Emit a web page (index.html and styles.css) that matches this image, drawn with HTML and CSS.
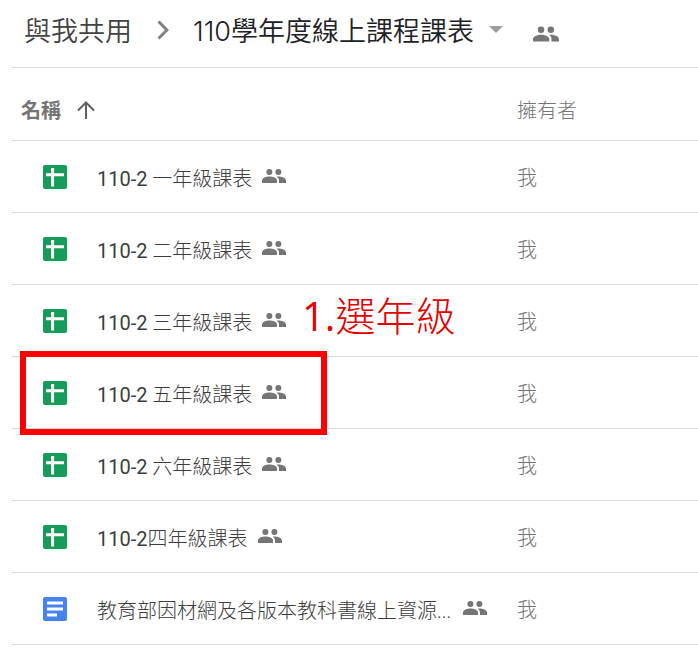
FILE: index.html
```html
<!DOCTYPE html>
<html lang="zh-Hant">
  <head>
    <meta charset="utf-8">
    <title>110學年度線上課程課表</title>
    <link rel="stylesheet" href="styles.css">
  </head>
  <body>
    <!-- shared icons -->
    <svg class="sprite" aria-hidden="true">
      <symbol id="people" viewBox="0 0 24 14">
        <circle cx="7.4" cy="3" r="3" />
        <circle cx="16.4" cy="3" r="3" />
        <path d="M0 14v-2.4C0 9 4.4 7.6 7.4 7.6S15 9 15 11.6V14z" />
        <path d="M14.8 7.7c.5-.1 1-.1 1.6-.1 3 0 7.6 1.4 7.6 4V14h-7v-2.4c0-1.6-.8-2.9-2.2-3.9z" />
      </symbol>
      <symbol id="sheet" viewBox="0 0 24 24">
        <rect width="24" height="24" rx="2" fill="#169c59" />
        <path d="M3 8.2h18v3H11.1V21.5H8.1V11.2H3zM8.1 3h3v6h-3z" fill="#fff" />
      </symbol>
      <symbol id="doc" viewBox="0 0 24 24">
        <rect width="24" height="24" rx="2" fill="#4683ee" />
        <path d="M4 4.5h16v3H4zM4 10.5h16v3H4zM4 16.5h10v3H4z" fill="#fff" />
      </symbol>
    </svg>

    <nav class="breadcrumb">
      <a class="parent" href="#">與我共用</a>
      <svg class="chevron" viewBox="0 0 12 20"><path d="M1.5 1.5L10 10l-8.500 8.500" /></svg>
      <button class="current" type="button">
        110學年度線上課程課表
        <svg class="caret" viewBox="0 0 14 7"><path d="M0 0h14L7 7z" /></svg>
      </button>
      <svg class="people people-large"><use href="#people" /></svg>
    </nav>

    <table class="files">
      <thead>
        <tr>
          <th class="name-col">
            <button class="sort" type="button">
              名稱
              <svg class="arrow" viewBox="0 0 18 18"><path d="M9 18V1.500M1 9.500l8-8 8 8" /></svg>
            </button>
          </th>
          <th class="owner-col">擁有者</th>
        </tr>
      </thead>
      <tbody>
        <tr>
          <td>
            <div class="file">
              <svg class="file-icon"><use href="#sheet" /></svg>
              <span class="file-name"><span class="term">110-2</span> 一年級課表</span>
              <svg class="people"><use href="#people" /></svg>
            </div>
          </td>
          <td class="owner">我</td>
        </tr>
        <tr>
          <td>
            <div class="file">
              <svg class="file-icon"><use href="#sheet" /></svg>
              <span class="file-name"><span class="term">110-2</span> 二年級課表</span>
              <svg class="people"><use href="#people" /></svg>
            </div>
          </td>
          <td class="owner">我</td>
        </tr>
        <tr>
          <td>
            <div class="file">
              <svg class="file-icon"><use href="#sheet" /></svg>
              <span class="file-name"><span class="term">110-2</span> 三年級課表</span>
              <svg class="people"><use href="#people" /></svg>
              <span class="note"><span class="step">1.</span>選年級</span>
            </div>
          </td>
          <td class="owner">我</td>
        </tr>
        <tr>
          <td>
            <div class="file">
              <svg class="file-icon"><use href="#sheet" /></svg>
              <span class="file-name"><span class="term">110-2</span> 五年級課表</span>
              <svg class="people"><use href="#people" /></svg>
              <span class="highlight"></span>
            </div>
          </td>
          <td class="owner">我</td>
        </tr>
        <tr>
          <td>
            <div class="file">
              <svg class="file-icon"><use href="#sheet" /></svg>
              <span class="file-name"><span class="term">110-2</span> 六年級課表</span>
              <svg class="people"><use href="#people" /></svg>
            </div>
          </td>
          <td class="owner">我</td>
        </tr>
        <tr>
          <td>
            <div class="file">
              <svg class="file-icon"><use href="#sheet" /></svg>
              <span class="file-name"><span class="term">110-2</span>四年級課表</span>
              <svg class="people"><use href="#people" /></svg>
            </div>
          </td>
          <td class="owner">我</td>
        </tr>
        <tr>
          <td>
            <div class="file">
              <svg class="file-icon"><use href="#doc" /></svg>
              <span class="file-name file-name-long">教育部因材網及各版本教科書線上資源...</span>
              <svg class="people"><use href="#people" /></svg>
            </div>
          </td>
          <td class="owner">我</td>
        </tr>
      </tbody>
    </table>
  </body>
</html>
```
FILE: styles.css
```css
* {
  box-sizing: border-box;
}

body {
  margin: 0;
  padding-left: 12px;
  background: #fff;
  color: #3c3c3c;
  font-family: Roboto, "Noto Sans CJK TC", sans-serif;
  font-size: 20px;
  font-weight: 300;
}

button {
  display: flex;
  align-items: center;
  padding: 0;
  border: none;
  background: none;
  color: inherit;
  font: inherit;
  cursor: pointer;
}

.sprite {
  position: absolute;
  width: 0;
  height: 0;
}

/* breadcrumb */
.breadcrumb {
  display: flex;
  align-items: center;
  height: 68px;
  padding: 0 0 8px 12px;
  border-bottom: 1px solid #dadada;
  font-family: Inter, "Noto Sans CJK TC", sans-serif;
  font-size: 27px;
  font-weight: 350;
  white-space: nowrap;
}

.parent {
  color: #424242;
  text-decoration: none;
}

.chevron {
  width: 12px;
  height: 20px;
  margin: 0 24px 0 25px;
  fill: none;
  stroke: #808080;
  stroke-width: 3;
}

.current {
  gap: 15px;
  color: #202124;
}

.caret {
  width: 14px;
  height: 7px;
  fill: #999c9e;
}

.people {
  flex: none;
  width: 24px;
  height: 14px;
  margin-bottom: 2px;
  fill: #757575;
}

.people-large {
  width: 26px;
  height: 16px;
  margin: 8px 0 0 30px;
}

/* file list */
.files {
  width: 100%;
  border-collapse: collapse;
  table-layout: fixed;
}

.files th,
.files td {
  height: 72px;
  padding: 0;
  border-bottom: 1px solid #dadada;
  text-align: left;
}

.files th {
  padding-top: 12px;
  color: #757575;
  font-weight: 300;
}

.owner-col {
  width: 181px;
}

.owner {
  color: #757575;
}

.sort {
  gap: 16px;
  padding-left: 9px;
  font-weight: 700;
}

.arrow {
  width: 18px;
  height: 18px;
  fill: none;
  stroke: #616161;
  stroke-width: 2;
}

.file {
  display: flex;
  position: relative;
  align-items: center;
  height: 71px;
  padding: 2px 0 0 31px;
  white-space: nowrap;
}

.file-icon {
  flex: none;
  width: 24px;
  height: 24px;
  margin-right: 30px;
}

.file-name {
  margin-right: 10px;
}

.file-name-long {
  min-width: 356px;
}

.term {
  font-weight: 400;
}

/* red marks over the list */
.note {
  position: absolute;
  top: 0;
  left: 290px;
  color: #e60000;
  font-family: "Open Sans", "Noto Sans CJK TC", sans-serif;
  font-size: 40px;
}

.step {
  font-weight: 400;
}

.highlight {
  position: absolute;
  top: -6px;
  left: 8px;
  width: 307px;
  height: 84px;
  border: 6px solid #f00;
}
```
